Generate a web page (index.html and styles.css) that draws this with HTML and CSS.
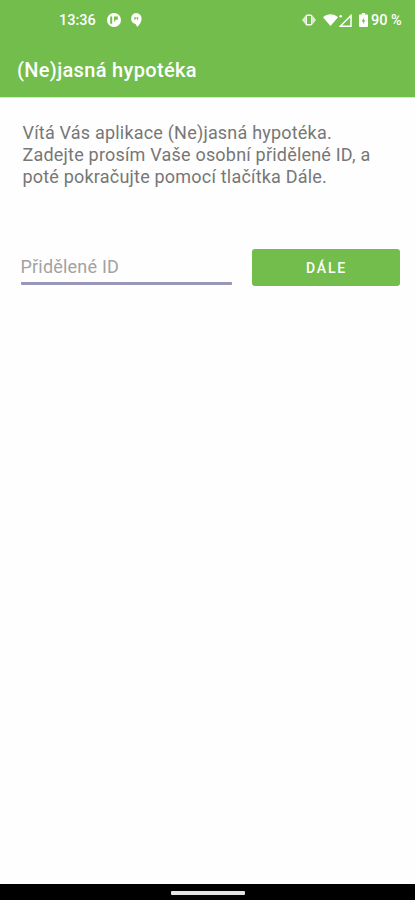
FILE: index.html
```html
<!DOCTYPE html>
<html lang="cs">
<head>
<meta charset="utf-8">
<title>(Ne)jasná hypotéka</title>
<link rel="stylesheet" href="styles.css">
</head>
<body>
<div class="screen">
  <header class="header">
    <div class="status">
      <span class="time">13:36</span>
      <svg class="app-icon" viewBox="0 0 14 14"><circle cx="7" cy="7" r="7" fill="#fff"/><path d="M3.200 3.600h2v7.200h-2zM7 3.600h3.800v3.200H8.200v1.600H7z" fill="#72bd4b"/></svg>
      <svg class="chat-icon" viewBox="0 0 12 14"><path d="M6 0a5.600 5.600 0 0 1 5.600 5.500c0 3.500-2.200 6.300-4.300 8.500L5.500 11A5.600 5.600 0 0 1 6 0z" fill="#fff"/><path d="M4 4.200h1.800v1.700L4.700 7.200zM6.400 4.200h1.800v1.700L7.100 7.200z" fill="#72bd4b"/></svg>
      <span class="spacer"></span>
      <svg class="vibrate" viewBox="0 0 14 12"><path d="M3.500 1.600v8.800L0 6zM10.500 1.600v8.800L14 6z" fill="#fff" opacity=".75"/><rect x="4.200" y="1.200" width="5.600" height="9.600" rx="1" fill="#72bd4b" stroke="#fff" stroke-width="1.400"/></svg>
      <svg class="wifi" viewBox="0 0 15 12"><path d="M0 3.200C4.200-.8 10.800-.8 15 3.200L7.500 12z" fill="#fff"/></svg>
      <svg class="signal" viewBox="0 0 13 13"><path d="M12 1.500v10.700H1.300z" fill="none" stroke="#fff" stroke-width="1.500"/><circle cx="1.700" cy="2.300" r="1.300" fill="#fff"/></svg>
      <svg class="battery" viewBox="0 0 9 14"><path d="M2.800 0h3.400v1.500H8q1 0 1 1V13q0 1-1 1H1q-1 0-1-1V2.500q0-1 1-1h1.800z" fill="#fff"/><path d="M4.800 4.500L2.700 8.400h1.500v2.800l2.100-4H4.800z" fill="#72bd4b"/></svg>
      <span class="percent">90 %</span>
    </div>
    <h1 class="title">(Ne)jasná hypotéka</h1>
  </header>
  <main class="content">
    <p class="intro">Vítá Vás aplikace (Ne)jasná hypotéka.<br>Zadejte prosím Vaše osobní přidělené ID, a<br>poté pokračujte pomocí tlačítka Dále.</p>
    <div class="form">
      <div class="field">Přidělené ID</div>
      <button class="next">DÁLE</button>
    </div>
  </main>
  <footer class="nav"><div class="handle"></div></footer>
</div>
</body>
</html>
```
FILE: styles.css
```css
* { box-sizing: border-box; }
body { margin: 0; background: #fefefe; font-family: Roboto, sans-serif; }
.screen { display: flex; flex-direction: column; width: 415px; height: 900px; }
.header { height: 98px; background: #72bd4b; color: #fff; border-bottom: 1px solid #d3e8c7; }
.status { display: flex; align-items: center; height: 40px; padding: 0 14px 0 59px; }
.time { width: 37px; font-size: 14.5px; font-weight: 500; white-space: nowrap; }
.app-icon { width: 14px; height: 14px; margin-left: 11px; }
.chat-icon { width: 12px; height: 14px; margin-left: 9px; }
.spacer { flex: 1; }
.vibrate { width: 14px; height: 12px; }
.wifi { width: 15px; height: 12px; margin-left: 7px; }
.signal { width: 13px; height: 13px; margin-left: 1px; }
.battery { width: 9px; height: 14px; margin-left: 7px; }
.percent { width: 30px; margin-left: 3px; font-size: 14.5px; font-weight: 500; white-space: nowrap; }
.title { margin: 0; padding: 17px 0 0 17px; font-size: 20px; line-height: 26px; font-weight: 500; letter-spacing: 0.33px; white-space: nowrap; }
.content { flex: 1; padding: 24px 15.5px 0 20.5px; }
.intro { margin: 0 0 0 2px; font-size: 18px; line-height: 22px; letter-spacing: 0.2px; color: #777; white-space: nowrap; }
.form { display: flex; justify-content: space-between; margin-top: 61px; }
.field { width: 211px; height: 36px; padding-top: 7px; border-bottom: 3px solid #9896b9; border-radius: 1px; font-size: 18px; line-height: 21px; letter-spacing: 0.2px; color: #a2a2a2; }
.next { width: 148px; height: 37px; margin: 0; padding: 1px 0 0 2px; border: 0; border-radius: 3px; background: #72bd4b; color: #fff; font: 500 14px Roboto, sans-serif; letter-spacing: 1.8px; }
.nav { height: 16px; padding-top: 7px; background: #000; }
.handle { width: 74px; height: 4px; margin: 0 auto; border-radius: 1px; background: #e4e4e4; }
```
